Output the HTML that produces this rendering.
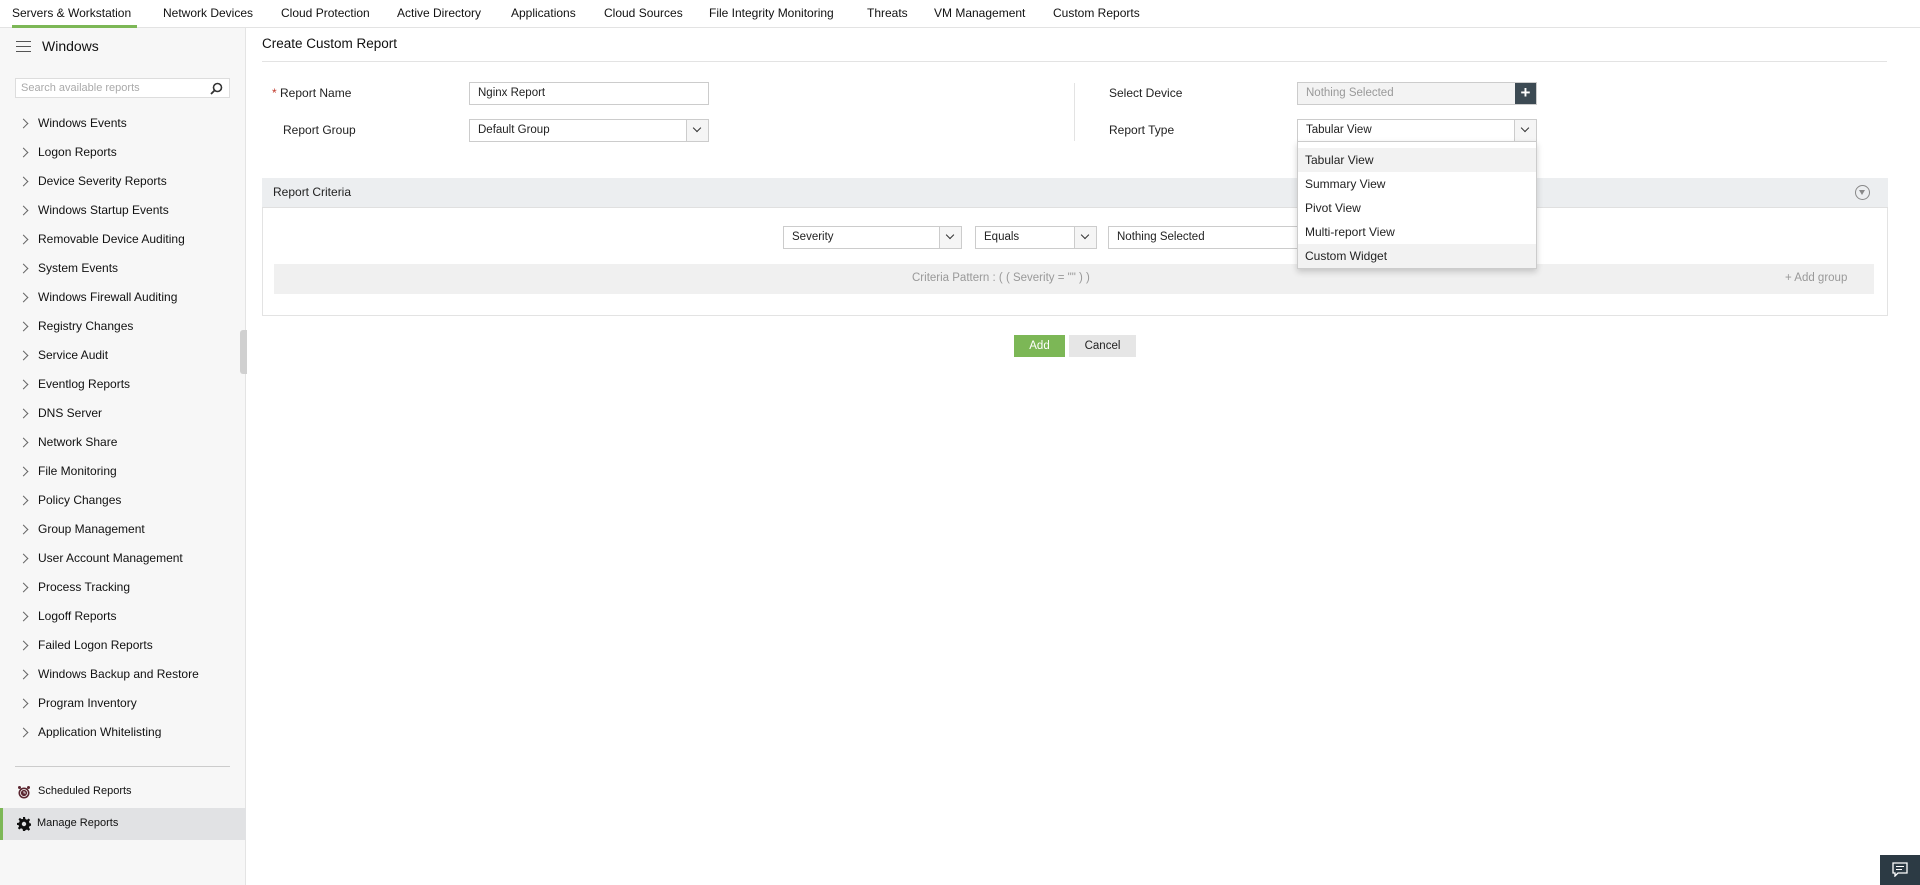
<!DOCTYPE html>
<html><head><meta charset="utf-8"><style>
*{box-sizing:border-box;margin:0;padding:0}
body{width:1920px;height:885px;overflow:hidden;background:#fff;font-family:"Liberation Sans",Arial,sans-serif;font-size:12px;color:#222;position:relative}
.abs{position:absolute}
.nav{left:0;top:0;width:1920px;height:28px;border-bottom:1px solid #e3e3e3}
.nav span{position:absolute;top:6px;font-size:12px;color:#111;white-space:nowrap}
.side{left:0;top:28px;width:246px;height:857px;background:#f7f7f7;border-right:1px solid #e4e4e4}
.mi{position:absolute;left:38px;font-size:12px;color:#111;white-space:nowrap}
.chev{position:absolute;left:20px;width:7px;height:7px;border-right:1px solid #666;border-top:1px solid #666;transform:rotate(45deg)}
.inp{position:absolute;border:1px solid #ccc;background:#fff;height:23px;padding:4px 8px;font-size:11.5px;white-space:nowrap;overflow:hidden}
.arr{position:absolute;top:0;right:0;width:22px;height:100%;border-left:1px solid #ccc;background:#f5f5f5}
.arr:after{content:"";position:absolute;left:7px;top:5px;width:5px;height:5px;border-right:1.6px solid #333;border-bottom:1.6px solid #333;transform:rotate(45deg)}
.lbl{position:absolute;font-size:12px;color:#222}
.dd{left:1297px;top:141px;width:240px;height:128px;background:#fff;border:1px solid #ccc;box-shadow:0 3px 6px rgba(0,0,0,.18)}
.dd div{height:24px;line-height:24px;padding-left:7px;font-size:12px}
</style></head><body>
<div class="abs nav">
<span style="left:12px">Servers &amp; Workstation</span>
<span style="left:163px">Network Devices</span>
<span style="left:281px">Cloud Protection</span>
<span style="left:397px">Active Directory</span>
<span style="left:511px">Applications</span>
<span style="left:604px">Cloud Sources</span>
<span style="left:709px">File Integrity Monitoring</span>
<span style="left:867px">Threats</span>
<span style="left:934px">VM Management</span>
<span style="left:1053px">Custom Reports</span>
<div style="position:absolute;left:12px;top:25px;width:125px;height:3px;background:#7cb756"></div>
</div>
<div class="abs side">
<div style="position:absolute;left:16px;top:13px;width:15px;height:1px;background:#555;box-shadow:0 5px 0 #555,0 10px 0 #555"></div>
<div style="position:absolute;left:42px;top:10px;font-size:14px;color:#111">Windows</div>
<div style="position:absolute;left:15px;top:60px;width:215px;border-top:1px solid #ddd"></div>
<div style="position:absolute;left:15px;top:50px;width:215px;height:20px;border:1px solid #ddd;background:#fff;padding:3px 5px;color:#aaa;font-size:11px">Search available reports
<svg style="position:absolute;right:6px;top:3px" width="13" height="13" viewBox="0 0 13 13"><circle cx="7.5" cy="5.5" r="4" fill="none" stroke="#333" stroke-width="1.6"/><line x1="4.6" y1="8.4" x2="1" y2="12" stroke="#333" stroke-width="1.8"/></svg></div>
</div>
<div id="menu"></div>
<div class="abs" style="left:15px;top:766px;width:215px;border-top:1px solid #ccc"></div>
<svg class="abs" style="left:17px;top:785px" width="14" height="14" viewBox="0 0 14 14"><circle cx="7" cy="8" r="5.5" fill="#5a2630"/><circle cx="7" cy="8" r="3.5" fill="none" stroke="#fff" stroke-width=".8"/><path d="M7 6v2h2" stroke="#fff" fill="none" stroke-width=".8"/><circle cx="2.5" cy="2.5" r="1.5" fill="#5a2630"/><circle cx="11.5" cy="2.5" r="1.5" fill="#5a2630"/></svg>
<div class="mi" style="top:785px;left:38px;font-size:11px">Scheduled Reports</div>
<div class="abs" style="left:0;top:808px;width:246px;height:32px;background:#e1e2e4;border-left:3px solid #7cb756"></div>
<svg class="abs" style="left:17px;top:817px" width="14" height="14" viewBox="0 0 14 14"><path d="M6 0h2l.4 2 1.6.7 1.7-1.2 1.4 1.4-1.2 1.7.7 1.6 2 .4v2l-2 .4-.7 1.6 1.2 1.7-1.4 1.4-1.7-1.2-1.6.7L8 14H6l-.4-2-1.6-.7-1.7 1.2-1.4-1.4 1.2-1.7L1.4 8 0 8V6l2-.4.7-1.6L1.5 2.3l1.4-1.4 1.7 1.2L6 2z" fill="#111"/><circle cx="7" cy="7" r="2.2" fill="#e1e2e4"/></svg>
<div class="mi" style="top:817px;left:37px;font-size:11px">Manage Reports</div>
<div class="abs" style="left:240px;top:330px;width:7px;height:44px;background:#d0d0d0;border-radius:3px 0 0 3px"></div>

<div class="abs" style="left:262px;top:36px;font-size:13.5px;color:#111">Create Custom Report</div>
<div class="abs" style="left:262px;top:61px;width:1625px;border-top:1px solid #e3e3e3"></div>
<div class="lbl" style="left:272px;top:86px"><span style="color:#c0392b">*</span> Report Name</div>
<div class="inp" style="left:469px;top:82px;width:240px">Nginx Report</div>
<div class="lbl" style="left:283px;top:123px">Report Group</div>
<div class="inp" style="left:469px;top:119px;width:240px">Default Group<div class="arr"></div></div>
<div class="abs" style="left:1074px;top:83px;height:58px;border-left:1px solid #e3e3e3"></div>
<div class="lbl" style="left:1109px;top:86px">Select Device</div>
<div class="inp" style="left:1297px;top:82px;width:240px;background:#f3f3f3;color:#999">Nothing Selected<div style="position:absolute;right:0;top:0;width:21px;height:100%;background:#3c4a53;color:#fff;font-size:17px;line-height:20px;text-align:center;font-weight:bold">+</div></div>
<div class="lbl" style="left:1109px;top:123px">Report Type</div>
<div class="inp" style="left:1297px;top:119px;width:240px">Tabular View<div class="arr"></div></div>

<div class="abs" style="left:262px;top:178px;width:1626px;height:138px;border:1px solid #e3e3e3"></div>
<div class="abs" style="left:262px;top:178px;width:1626px;height:30px;background:#eceef0;border-bottom:1px solid #e0e0e0"></div>
<div class="lbl" style="left:273px;top:185px">Report Criteria</div>
<div class="abs" style="left:1855px;top:185px;width:15px;height:15px;border:1px solid #888;border-radius:50%"><div style="position:absolute;left:3px;top:4px;border-left:3.5px solid transparent;border-right:3.5px solid transparent;border-top:5px solid #888"></div></div>
<div class="inp" style="left:783px;top:226px;width:179px">Severity<div class="arr"></div></div>
<div class="inp" style="left:975px;top:226px;width:122px">Equals<div class="arr"></div></div>
<div class="inp" style="left:1108px;top:226px;width:200px">Nothing Selected</div>
<div class="abs" style="left:274px;top:264px;width:1600px;height:30px;background:#f0f0f0"></div>
<div class="abs" style="left:912px;top:272px;color:#999;font-size:11.5px">Criteria Pattern : ( ( Severity = "" ) )</div>
<div class="abs" style="left:1785px;top:272px;color:#999;font-size:11.5px">+ Add group</div>
<div class="abs" style="left:1014px;top:335px;width:51px;height:22px;background:#7cb756;color:#fff;text-align:center;line-height:22px;font-size:11.5px">Add</div>
<div class="abs" style="left:1069px;top:335px;width:67px;height:22px;background:#e6e6e6;color:#222;text-align:center;line-height:22px;font-size:11.5px">Cancel</div>

<div class="abs dd"><div style="height:6px"></div><div style="background:#f2f2f2">Tabular View</div><div>Summary View</div><div>Pivot View</div><div>Multi-report View</div><div style="background:#f2f2f2">Custom Widget</div></div>

<div class="abs" style="left:1880px;top:855px;width:40px;height:30px;background:#2c3a44"><svg style="position:absolute;left:12px;top:7px" width="16" height="15" viewBox="0 0 16 15"><path d="M1 1h14v10H6l-3 3v-3H1z" fill="none" stroke="#fff" stroke-width="1.3"/><path d="M4 4.5h8M4 7.5h6" stroke="#fff"/></svg></div>

<div id="m" class="abs" style="left:0;top:0">
<script>
var items=["Windows Events","Logon Reports","Device Severity Reports","Windows Startup Events","Removable Device Auditing","System Events","Windows Firewall Auditing","Registry Changes","Service Audit","Eventlog Reports","DNS Server","Network Share","File Monitoring","Policy Changes","Group Management","User Account Management","Process Tracking","Logoff Reports","Failed Logon Reports","Windows Backup and Restore","Program Inventory","Application Whitelisting"];
var h="";items.forEach(function(t,i){var y=116+i*29;h+='<div class="chev" style="top:'+(y+4)+'px"></div><div class="mi" style="top:'+y+'px">'+t+'</div>';});
document.write('<div style="position:absolute;left:0;top:0;width:246px;height:738px;overflow:hidden">'+h+'</div>');
</script>
</div>
</body></html>
